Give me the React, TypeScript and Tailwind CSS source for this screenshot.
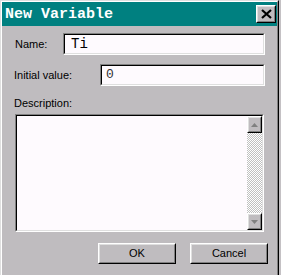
import React from 'react';

const labelFont = { fontFamily: '"Liberation Sans", Arial, sans-serif' };

const Raised: React.FC<{ className?: string; children?: React.ReactNode }> = ({ className = '', children }) => (
  <div className={`border border-t-white border-l-white border-r-black border-b-black ${className}`}>
    <div className="w-full h-full border border-t-[#dfdfdf] border-l-[#dfdfdf] border-r-[#808080] border-b-[#808080] bg-[#bfbcbf] flex items-center justify-center">
      {children}
    </div>
  </div>
);

const Sunken: React.FC<{ className?: string; children?: React.ReactNode }> = ({ className = '', children }) => (
  <div className={`border border-t-[#808080] border-l-[#808080] border-r-white border-b-white ${className}`}>
    <div className="w-full h-full border border-t-black border-l-black border-r-[#dfdfdf] border-b-[#dfdfdf] bg-[#fefafe] flex">
      {children}
    </div>
  </div>
);

const Arrow: React.FC<{ up?: boolean }> = ({ up }) => (
  <svg width="7" height="4" viewBox="0 0 7 4">
    {up ? <polygon points="3.5,0 7,4 0,4" fill="#808080" /> : <polygon points="0,0 7,0 3.5,4" fill="#808080" />}
  </svg>
);

export default function App() {
  return (
    <div className="w-[281px] h-[275px] bg-[#c4c1c4] flex">
      <div className="w-[279px] h-[275px] bg-[#bfbcbf] border-t border-l border-r border-t-[#dfdfdf] border-l-[#dfdfdf] border-r-black flex">
        <div className="flex-1 border-t border-l border-r border-t-white border-l-white border-r-[#808080] flex flex-col">
          {/* title bar */}
          <div className="h-[24px] bg-[#008080] flex items-center pl-[3px] pr-[1px]">
            <span
              className="text-white font-bold text-[15px] leading-none flex-1"
              style={{ fontFamily: '"Liberation Mono", "Courier New", monospace' }}
            >
              New Variable
            </span>
            <Raised className="w-[20px] h-[18px]">
              <svg width="11" height="10" viewBox="0 0 11 10">
                <path d="M1 1 L10 9 M10 1 L1 9" stroke="black" strokeWidth="2.2" />
              </svg>
            </Raised>
          </div>

          {/* name row */}
          <div className="flex items-center mt-[7px] pl-[13px]" style={labelFont}>
            <span className="w-[48px] text-[11px] text-black">Name:</span>
            <Sunken className="w-[202px] h-[22px]">
              <span
                className="pl-[6px] text-[14px] leading-[18px] text-black"
                style={{ fontFamily: '"Liberation Mono", "Courier New", monospace' }}
              >
                Ti
              </span>
            </Sunken>
          </div>

          {/* initial value row */}
          <div className="flex items-center mt-[9px] pl-[12px]" style={labelFont}>
            <span className="w-[86px] text-[11px] text-black">Initial value:</span>
            <Sunken className="w-[165px] h-[22px]">
              <span
                className="pl-[4px] text-[13px] leading-[18px] text-[#333]"
                style={{ fontFamily: '"Liberation Mono", "Courier New", monospace' }}
              >
                0
              </span>
            </Sunken>
          </div>

          {/* description */}
          <div className="mt-[11px] pl-[12px] text-[11px] leading-[13px] text-black" style={labelFont}>
            Description:
          </div>
          <Sunken className="ml-[13px] mt-[4px] w-[249px] h-[118px]">
            <div className="flex-1" />
            <div className="w-[15px] flex flex-col">
              <Raised className="w-[15px] h-[17px]">
                <Arrow up />
              </Raised>
              <div className="flex-1 bg-[repeating-conic-gradient(#c0c0c0_0_25%,#ffffff_0_50%)] bg-[length:2px_2px]" />
              <Raised className="w-[15px] h-[17px]">
                <Arrow />
              </Raised>
            </div>
          </Sunken>

          {/* buttons */}
          <div className="flex mt-[11px] pl-[96px] gap-[14px]" style={labelFont}>
            <Raised className="w-[78px] h-[21px]">
              <span className="text-[11px] text-black">OK</span>
            </Raised>
            <Raised className="w-[78px] h-[21px]">
              <span className="text-[11px] text-black">Cancel</span>
            </Raised>
          </div>
        </div>
      </div>
    </div>
  );
}
